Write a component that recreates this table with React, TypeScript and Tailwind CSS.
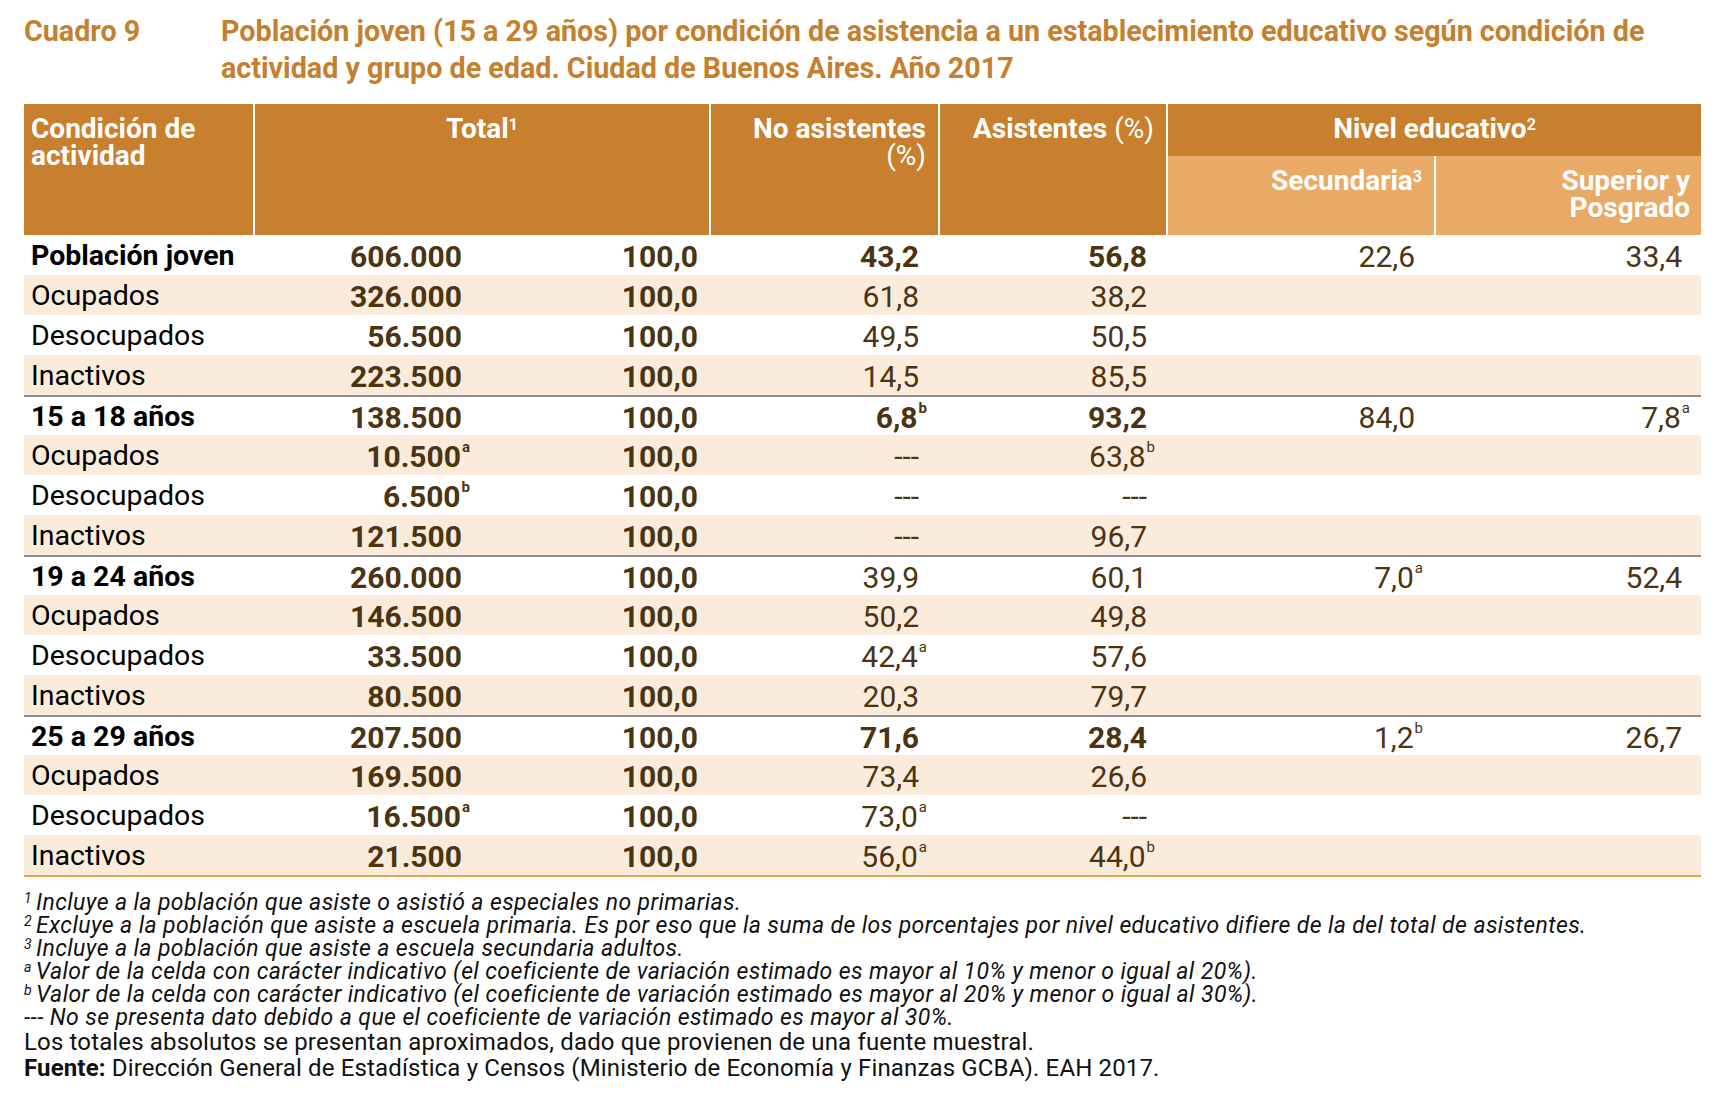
import React from 'react';

type Cell = { v: string; sup?: string; bold?: boolean } | null;

interface Row {
  label: string;
  group?: boolean;
  total: string;
  totalSup?: string;
  no: Cell;
  si: Cell;
  sec?: Cell;
  sup?: Cell;
}

const rows: Row[] = [
  { label: 'Población joven', group: true, total: '606.000', no: { v: '43,2', bold: true }, si: { v: '56,8', bold: true }, sec: { v: '22,6' }, sup: { v: '33,4' } },
  { label: 'Ocupados', total: '326.000', no: { v: '61,8' }, si: { v: '38,2' } },
  { label: 'Desocupados', total: '56.500', no: { v: '49,5' }, si: { v: '50,5' } },
  { label: 'Inactivos', total: '223.500', no: { v: '14,5' }, si: { v: '85,5' } },
  { label: '15 a 18 años', group: true, total: '138.500', no: { v: '6,8', sup: 'b', bold: true }, si: { v: '93,2', bold: true }, sec: { v: '84,0' }, sup: { v: '7,8', sup: 'a' } },
  { label: 'Ocupados', total: '10.500', totalSup: 'a', no: { v: '---' }, si: { v: '63,8', sup: 'b' } },
  { label: 'Desocupados', total: '6.500', totalSup: 'b', no: { v: '---' }, si: { v: '---' } },
  { label: 'Inactivos', total: '121.500', no: { v: '---' }, si: { v: '96,7' } },
  { label: '19 a 24 años', group: true, total: '260.000', no: { v: '39,9' }, si: { v: '60,1' }, sec: { v: '7,0', sup: 'a' }, sup: { v: '52,4' } },
  { label: 'Ocupados', total: '146.500', no: { v: '50,2' }, si: { v: '49,8' } },
  { label: 'Desocupados', total: '33.500', no: { v: '42,4', sup: 'a' }, si: { v: '57,6' } },
  { label: 'Inactivos', total: '80.500', no: { v: '20,3' }, si: { v: '79,7' } },
  { label: '25 a 29 años', group: true, total: '207.500', no: { v: '71,6', bold: true }, si: { v: '28,4', bold: true }, sec: { v: '1,2', sup: 'b' }, sup: { v: '26,7' } },
  { label: 'Ocupados', total: '169.500', no: { v: '73,4' }, si: { v: '26,6' } },
  { label: 'Desocupados', total: '16.500', totalSup: 'a', no: { v: '73,0', sup: 'a' }, si: { v: '---' } },
  { label: 'Inactivos', total: '21.500', no: { v: '56,0', sup: 'a' }, si: { v: '44,0', sup: 'b' } },
];

const Value: React.FC<{ cell?: Cell; pad?: string }> = ({ cell, pad = 'pr-[19px]' }) => {
  if (!cell) return <div />;
  return (
    <div className={`flex items-center justify-end ${pad} ${cell.bold ? 'font-bold' : ''}`}>
      <span>{cell.v}</span>
      {cell.sup && (
        <span className="relative -top-[9px] -mr-[8px] ml-[1px] text-[15px] leading-none">{cell.sup}</span>
      )}
    </div>
  );
};

const Note: React.FC<{ mark: string; children: React.ReactNode }> = ({ mark, children }) => (
  <p>
    <span className="relative -top-[7px] mr-[4px] text-[14px] leading-none">{mark}</span>
    {children}
  </p>
);

const App: React.FC = () => {
  return (
    <div className="w-[1732px] h-[1102px] bg-white font-[Roboto,sans-serif] text-black">
      <div className="flex pl-[24px] pt-[13px] text-[28.7px] font-bold leading-[37px] text-[#C47F2F]">
        <div className="w-[197px] shrink-0">Cuadro 9</div>
        <div className="w-[1460px]">
          Población joven (15 a 29 años) por condición de asistencia a un establecimiento educativo según condición de actividad y grupo de edad. Ciudad de Buenos Aires. Año 2017
        </div>
      </div>

      <div className="ml-[24px] mt-[17px] w-[1677px]">
        {/* header */}
        <div className="grid h-[131px] grid-cols-[229px_228px_228px_229px_228px_268px_267px] grid-rows-[52px_79px] bg-[#C8802E] text-[28px] font-bold leading-[27px] text-white">
          <div className="row-span-2 pl-[7px] pt-[11px]">
            Condición de
            <br />
            actividad
          </div>
          <div className="col-span-2 row-span-2 border-l-2 border-white pt-[11px] text-center">
            Total<span className="relative -top-[8px] text-[16px] leading-none">1</span>
          </div>
          <div className="row-span-2 border-l-2 border-white pr-[12px] pt-[11px] text-right">
            No asistentes
            <br />
            <span className="font-normal">(%)</span>
          </div>
          <div className="row-span-2 border-l-2 border-white pr-[12px] pt-[11px] text-right">
            Asistentes <span className="font-normal">(%)</span>
          </div>
          <div className="col-span-2 border-l-2 border-white pt-[11px] text-center">
            Nivel educativo<span className="relative -top-[8px] text-[16px] leading-none">2</span>
          </div>
          <div className="border-l-2 border-white bg-[#E8AA66] pr-[12px] pt-[11px] text-right">
            Secundaria<span className="relative -top-[8px] text-[16px] leading-none">3</span>
          </div>
          <div className="border-l-2 border-white bg-[#E8AA66] pr-[11px] pt-[11px] text-right">
            Superior y
            <br />
            Posgrado
          </div>
        </div>

        {/* body */}
        <div className="border-b-2 border-[#E9A04E] text-[30px] leading-none text-[#4A3412]">
          {rows.map((r, i) => (
            <div
              key={i}
              className={`grid h-[40px] grid-cols-[229px_228px_228px_229px_228px_268px_267px] items-center pt-[3px] ${
                i % 2 === 1 ? 'bg-[#FAEBDA]' : 'bg-white'
              } ${r.group && i > 0 ? 'border-t-2 border-[#8C8C8C]' : ''}`}
            >
              <div className={`pl-[7px] text-[28.5px] text-black ${r.group ? 'font-bold' : ''}`}>{r.label}</div>
              <Value cell={{ v: r.total, sup: r.totalSup, bold: true }} />
              <Value cell={{ v: '100,0', bold: true }} pad="pr-[11px]" />
              <Value cell={r.no} />
              <Value cell={r.si} />
              <Value cell={r.sec ?? null} />
              <Value cell={r.sup ?? null} />
            </div>
          ))}
        </div>
      </div>

      {/* notes */}
      <div className="ml-[24px] mt-[14px] text-[#111]">
        <div className="text-[23px] italic leading-[23px] tracking-[0.4px]">
          <Note mark="1">Incluye a la población que asiste o asistió a especiales no primarias.</Note>
          <Note mark="2">Excluye a la población que asiste a escuela primaria. Es por eso que la suma de los porcentajes por nivel educativo difiere de la del total de asistentes.</Note>
          <Note mark="3">Incluye a la población que asiste a escuela secundaria adultos.</Note>
          <Note mark="a">Valor de la celda con carácter indicativo (el coeficiente de variación estimado es mayor al 10% y menor o igual al 20%).</Note>
          <Note mark="b">Valor de la celda con carácter indicativo (el coeficiente de variación estimado es mayor al 20% y menor o igual al 30%).</Note>
          <p>--- No se presenta dato debido a que el coeficiente de variación estimado es mayor al 30%.</p>
        </div>
        <p className="mt-[1px] text-[24px] leading-[25px] tracking-[0.15px]">
          Los totales absolutos se presentan aproximados, dado que provienen de una fuente muestral.
        </p>
        <p className="mt-[1px] text-[24px] leading-[25px] tracking-[0.15px]">
          <span className="font-bold">Fuente:</span> Dirección General de Estadística y Censos (Ministerio de Economía y Finanzas GCBA). EAH 2017.
        </p>
      </div>
    </div>
  );
};

export default App;
